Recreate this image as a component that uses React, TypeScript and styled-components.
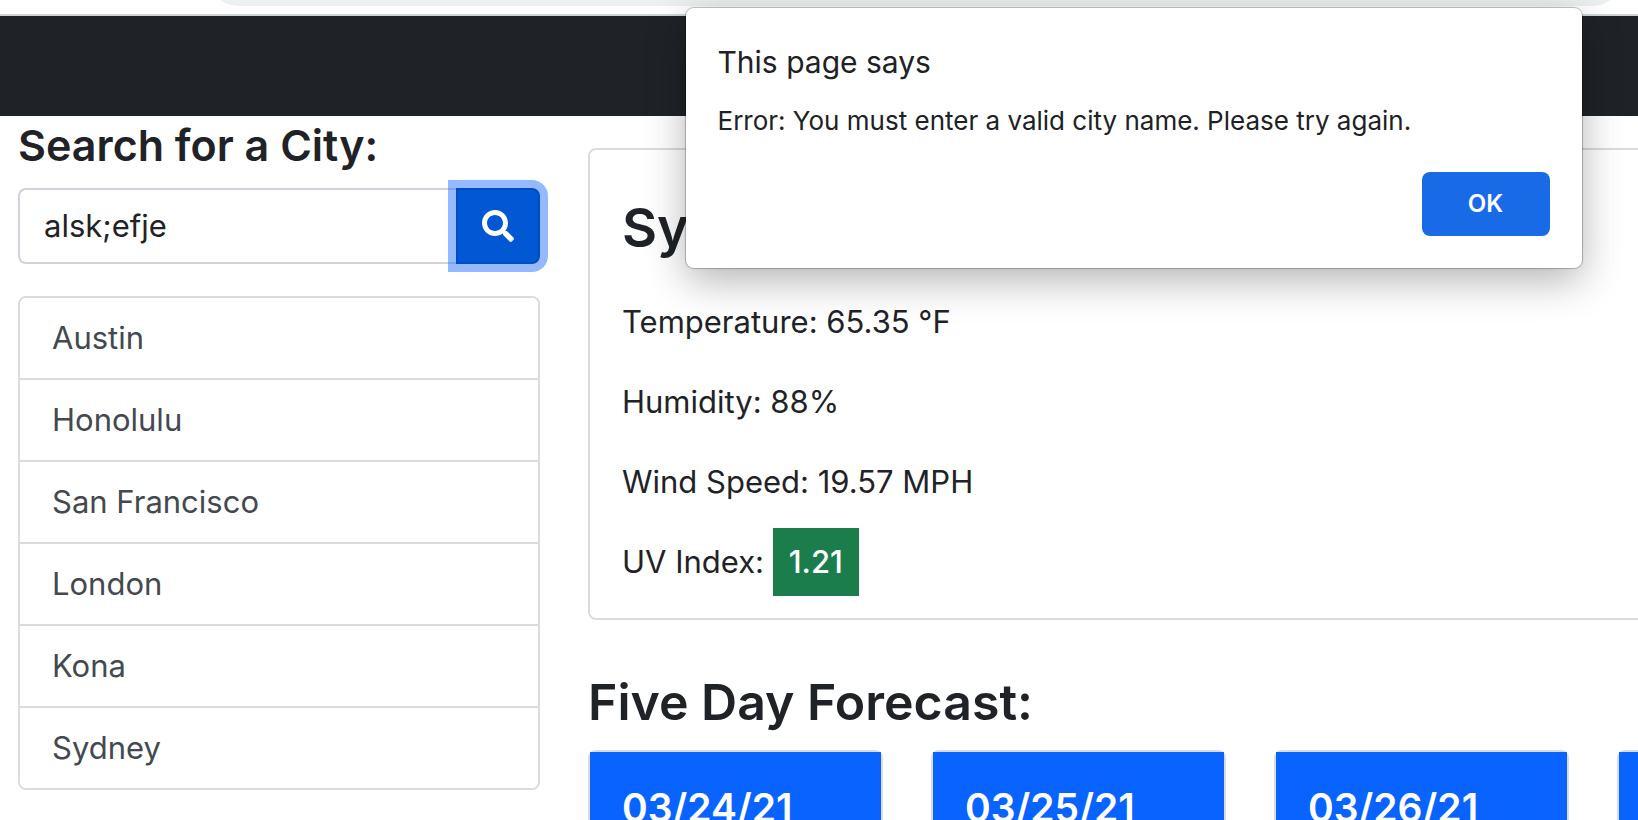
import React, { useState } from "react";
import styled, { createGlobalStyle } from "styled-components";
import { FaSearch } from "react-icons/fa";

const GlobalStyle = createGlobalStyle`
  *, *::before, *::after { box-sizing: border-box; }
  html { overflow: hidden; }
  body {
    margin: 0;
    background: #fff;
    color: #1f2327;
    font-family: Inter, "Liberation Sans", sans-serif;
    font-size: 31px;
    line-height: 48px;
  }
  h1, h2, h3, p, ul { margin: 0; padding: 0; }
  button, input { font: inherit; }
`;

const Viewport = styled.div`
  height: 100vh;
  overflow: hidden;
  position: relative;
`;

const BrowserBar = styled.div`
  display: flex;
  align-items: flex-end;
  height: 16px;
  padding: 0 17px 8px 210px;
  overflow: hidden;
  border-bottom: 2px solid #ced4d8;
`;

const AddressPill = styled.div`
  flex: 1;
  height: 56px;
  border-radius: 28px;
  background: #ecf0f1;
`;

const Page = styled.div`
  width: max-content;
  min-width: 100%;
  position: relative;
`;

const Banner = styled.header`
  height: 100px;
  background: #1f2327;
`;

const Columns = styled.div`
  display: flex;
  align-items: flex-start;
  gap: 48px;
  padding: 0 12px 0 18px;
`;

const Sidebar = styled.aside`
  flex: none;
  width: 522px;
`;

const SearchForm = styled.form`
  margin-bottom: 32px;
`;

const SearchLabel = styled.label`
  display: block;
  margin-bottom: 14px;
  font-size: 43px;
  font-weight: 600;
  line-height: 58px;
`;

const InputGroup = styled.div`
  display: flex;
  height: 76px;
`;

const SearchInput = styled.input`
  flex: 1;
  min-width: 0;
  padding: 0 24px;
  border: 2px solid #ced4da;
  border-right: 0;
  border-radius: 8px 0 0 8px;
  background: #fff;
  color: #1f2327;
  outline: none;
`;

const SearchButton = styled.button`
  display: grid;
  place-items: center;
  width: 84px;
  padding: 0;
  border: 2px solid #024dbc;
  border-radius: 0 8px 8px 0;
  background: #0257d5;
  color: #fff;
  box-shadow: 0 0 0 8px rgba(49, 120, 253, 0.52);
`;

const CityList = styled.ul`
  list-style: none;
  border: 2px solid #dbdbdb;
  border-radius: 8px;
  overflow: hidden;
`;

const CityItem = styled.li`
  & + & { border-top: 2px solid #dbdbdb; }
`;

const CityButton = styled.button`
  display: block;
  width: 100%;
  padding: 16px 32px;
  border: 0;
  background: #fff;
  color: #43494f;
  text-align: left;
`;

const Main = styled.main`
  flex: 1 0 auto;
  padding-top: 32px;
`;

const WeatherCard = styled.section`
  display: flex;
  flex-direction: column;
  gap: 32px;
  margin-bottom: 48px;
  padding: 32px;
  border: 2px solid #dbdbdb;
  border-radius: 8px;
`;

const CityTitle = styled.h2`
  padding-top: 8px;
  font-size: 54px;
  font-weight: 600;
  line-height: 76px;
`;

const UvBadge = styled.span`
  display: inline-block;
  margin: -10px 0;
  padding: 10px 16px;
  background: #1a7d4b;
  color: #fff;
  font-weight: 500;
`;

const ForecastTitle = styled.h2`
  margin-bottom: 14px;
  font-size: 50px;
  font-weight: 600;
  line-height: 68px;
`;

const ForecastGrid = styled.div`
  display: grid;
  grid-template-columns: repeat(5, minmax(295px, 1fr));
  gap: 48px;
`;

const DayCard = styled.article`
  border: 2px solid #dbdbdb;
  border-radius: 8px;
`;

const DayBody = styled.div`
  height: 240px;
  padding: 32px;
  background: #0863ff;
  color: #fff;
`;

const DayTitle = styled.h3`
  font-size: 39px;
  font-weight: 600;
  line-height: 48px;
`;

const DialogLayer = styled.div`
  position: absolute;
  top: -8px;
  left: 0;
  right: 0;
  display: flex;
  justify-content: center;
`;

const Dialog = styled.div`
  width: 896px;
  padding: 32px;
  border-radius: 8px;
  background: #fff;
  color: #202124;
  box-shadow: 0 0 1px 1px rgba(0, 0, 0, 0.25), 0 12px 40px rgba(0, 0, 0, 0.3);
`;

const DialogTitle = styled.h1`
  font-size: 30px;
  font-weight: 400;
  line-height: 44px;
`;

const DialogMessage = styled.p`
  margin: 16px 0 30px;
  font-size: 26px;
  line-height: 42px;
`;

const DialogActions = styled.div`
  display: flex;
  justify-content: flex-end;
`;

const OkButton = styled.button`
  width: 128px;
  height: 64px;
  padding: 0;
  border: 0;
  border-radius: 8px;
  background: #196ae6;
  color: #fff;
  font-size: 24px;
  font-weight: 600;
`;

const cities = ["Austin", "Honolulu", "San Francisco", "London", "Kona", "Sydney"];
const days = ["03/24/21", "03/25/21", "03/26/21", "03/27/21", "03/28/21"];

export default function App() {
  const [query, setQuery] = useState("alsk;efje");

  return (
    <Viewport>
      <GlobalStyle />
      <BrowserBar>
        <AddressPill />
      </BrowserBar>
      <Page>
        <Banner />
        <Columns>
          <Sidebar>
            <SearchForm onSubmit={(e) => e.preventDefault()}>
              <SearchLabel htmlFor="city">Search for a City:</SearchLabel>
              <InputGroup>
                <SearchInput
                  id="city"
                  type="text"
                  value={query}
                  onChange={(e) => setQuery(e.target.value)}
                />
                <SearchButton type="submit" aria-label="Search">
                  <FaSearch size={32} />
                </SearchButton>
              </InputGroup>
            </SearchForm>
            <CityList>
              {cities.map((city) => (
                <CityItem key={city}>
                  <CityButton type="button">{city}</CityButton>
                </CityItem>
              ))}
            </CityList>
          </Sidebar>
          <Main>
            <WeatherCard>
              <CityTitle>Sydney</CityTitle>
              <p>Temperature: 65.35 °F</p>
              <p>Humidity: 88%</p>
              <p>Wind Speed: 19.57 MPH</p>
              <p>
                UV Index: <UvBadge>1.21</UvBadge>
              </p>
            </WeatherCard>
            <ForecastTitle>Five Day Forecast:</ForecastTitle>
            <ForecastGrid>
              {days.map((day) => (
                <DayCard key={day}>
                  <DayBody>
                    <DayTitle>{day}</DayTitle>
                  </DayBody>
                </DayCard>
              ))}
            </ForecastGrid>
          </Main>
        </Columns>
        <DialogLayer>
          <Dialog role="alertdialog" aria-labelledby="alert-title" aria-describedby="alert-text">
            <DialogTitle id="alert-title">This page says</DialogTitle>
            <DialogMessage id="alert-text">
              Error: You must enter a valid city name. Please try again.
            </DialogMessage>
            <DialogActions>
              <OkButton type="button">OK</OkButton>
            </DialogActions>
          </Dialog>
        </DialogLayer>
      </Page>
    </Viewport>
  );
}
